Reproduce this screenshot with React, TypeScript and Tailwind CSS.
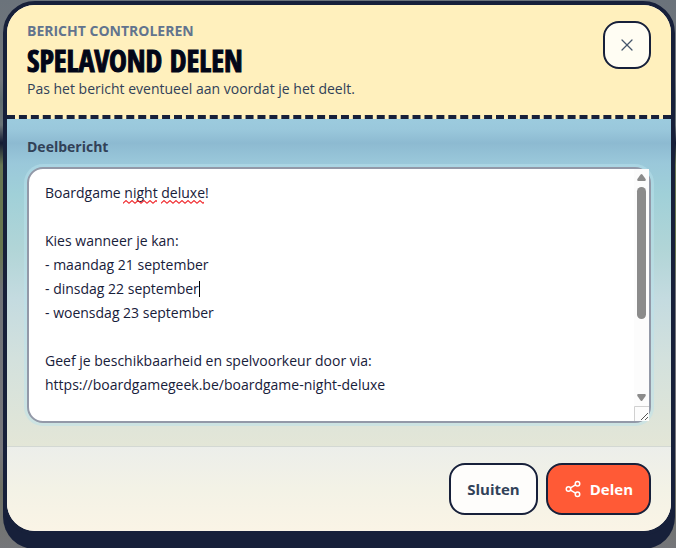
import { useState } from "react";
import { Share2, X } from "lucide-react";

const DEFAULT_MESSAGE = `Boardgame night deluxe!

Kies wanneer je kan:
- maandag 21 september
- dinsdag 22 september
- woensdag 23 september

Geef je beschikbaarheid en spelvoorkeur door via:
https://boardgamegeek.be/boardgame-night-deluxe`;

function Squiggle({ className }: { className: string }) {
    return (
        <svg className={className} height="4" aria-hidden="true">
            <defs>
                <pattern id="squiggle" width="6" height="4" patternUnits="userSpaceOnUse">
                    <path d="M-0.5 3.6 L3 0.6 L6.5 3.6" fill="none" stroke="#f0282d" strokeWidth="1.2" />
                </pattern>
            </defs>
            <rect width="100%" height="4" fill="url(#squiggle)" />
        </svg>
    );
}

function ScrollRail() {
    return (
        <div className="pointer-events-none absolute inset-y-0.5 right-0.5 flex w-[15px] flex-col bg-[#fcfcfc]" aria-hidden="true">
            <div className="relative flex-1">
                <svg className="absolute left-[3px] top-1" width="9" height="8" viewBox="0 0 9 8">
                    <path d="M3.6 1.6 Q4.5 0.4 5.4 1.6 L8.6 6 Q9.2 7.8 7.8 8 H1.2 Q-0.2 7.8 0.4 6 Z" fill="#8b8b8b" />
                </svg>
                <div className="absolute left-[3px] top-[18px] h-[132px] w-[9px] rounded-full bg-[#8b8b8b]" />
                <svg className="absolute bottom-1 left-[3px]" width="9" height="8" viewBox="0 0 9 8">
                    <path d="M3.6 6.4 Q4.5 7.6 5.4 6.4 L8.6 2 Q9.2 0.2 7.8 0 H1.2 Q-0.2 0.2 0.4 2 Z" fill="#8b8b8b" />
                </svg>
            </div>
            <svg width="15" height="15" viewBox="0 0 15 15">
                <path d="M0.5 15 V0.5 H15" fill="none" stroke="#d0d0d0" />
                <path d="M7 14 L14 7 M11 14 L14 11" fill="none" stroke="#555" />
            </svg>
        </div>
    );
}

export default function App() {
    const [message, setMessage] = useState(DEFAULT_MESSAGE);

    return (
        <main className="min-h-screen overflow-hidden bg-[linear-gradient(to_bottom,#6b737b_0,#73777c_80px,#5f6c70_100px,#6b7376_125px,#141b33_143px,#687652_165px,#68764e_250px,#6f7277_290px,#77777c_450px,#6e7064_490px,#75767a_548px)] pl-[3px] pr-px pt-px font-['Trebuchet_MS','Open_Sans',sans-serif] text-[#17203a]">
            <section
                role="dialog"
                aria-labelledby="share-title"
                className="mx-auto max-w-2xl overflow-hidden rounded-[32px] border-4 border-[#17203a] bg-[#faf4e6] shadow-[0_14px_0_#17203a]"
            >
                <header className="flex items-start justify-between border-b-4 border-dashed border-[#17203a] bg-[#fff0bd] px-5 py-4">
                    <div>
                        <p className="text-sm font-bold uppercase text-slate-500">Bericht controleren</p>
                        <h1 id="share-title" className="mt-0.5 font-['Impact','Open_Sans_Condensed','Roboto_Condensed',sans-serif] text-3xl font-black uppercase leading-9 text-slate-950 [-webkit-text-stroke:1px]">
                            Spelavond delen
                        </h1>
                        <p className="text-sm text-slate-700">Pas het bericht eventueel aan voordat je het deelt.</p>
                    </div>
                    <button
                        type="button"
                        aria-label="Venster sluiten"
                        className="flex size-12 shrink-0 items-center justify-center rounded-2xl border-2 border-[#17203a] bg-[#fffdf3] text-slate-600"
                    >
                        <X size={20} strokeWidth={1.5} />
                    </button>
                </header>

                <div className="bg-[linear-gradient(to_bottom,#9ccbde_0,#9ac8dc_10px,#8dbad1_24px,#9ac8da_44px,#a0d0d8_75px,#b1d5d7_130px,#c4dbe0_180px,#d3e1dd_240px,#e3e6d7_327px)] px-5 pb-[23px] pt-4">
                    <label htmlFor="share-message" className="block text-sm font-bold leading-6 text-slate-700">
                        Deelbericht
                    </label>
                    <div className="relative mt-2">
                        <textarea
                            id="share-message"
                            value={message}
                            onChange={(e) => setMessage(e.target.value)}
                            className="block h-64 w-full resize-none overflow-hidden rounded-2xl border-2 border-[#9399a8] bg-white px-4 py-3 text-sm leading-6 shadow-[0_0_0_3px_rgba(186,226,236,0.5)] outline-none"
                        />
                        <Squiggle className="pointer-events-none absolute left-24 top-[33px] w-[34px]" />
                        <Squiggle className="pointer-events-none absolute left-[134px] top-[33px] w-[43px]" />
                        <span className="pointer-events-none absolute left-[172px] top-[114px] h-4 w-px bg-black" />
                        <ScrollRail />
                    </div>
                </div>

                <footer className="flex justify-end gap-2 border-t border-[#d3d8d3] bg-[linear-gradient(to_bottom,#eceeea,#f3f2e6_50%,#faf4e6)] px-5 py-4">
                    <button
                        type="button"
                        className="h-13 rounded-2xl border-2 border-[#17203a] bg-[#fefdfb] px-4 text-[15px] font-bold text-slate-700"
                    >
                        Sluiten
                    </button>
                    <button
                        type="button"
                        className="flex h-13 items-center gap-2 rounded-2xl border-2 border-[#17203a] bg-[#ff5a36] px-4 text-[15px] font-bold text-white"
                    >
                        <Share2 size={18} />
                        Delen
                    </button>
                </footer>
            </section>
        </main>
    );
}
